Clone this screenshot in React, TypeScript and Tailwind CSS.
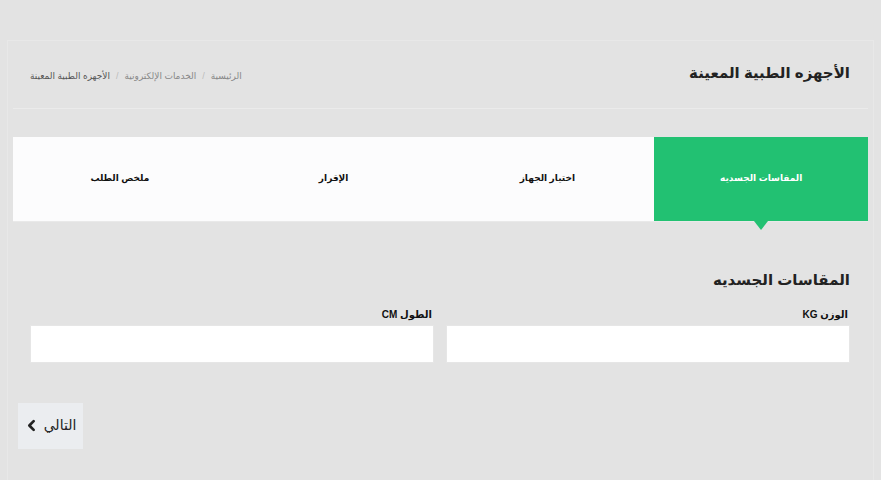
export default function App() {
  const steps = ["المقاسات الجسديه", "اختيار الجهاز", "الإقرار", "ملخص الطلب"];
  return (
    <main
      dir="rtl"
      className="w-[881px] h-[480px] bg-[#e3e3e3] overflow-hidden pt-[40px] px-[7px]"
      style={{ fontFamily: '"Liberation Sans", "DejaVu Sans", sans-serif' }}
    >
      <div className="h-full border-t border-r border-l border-[#e8e8e8] px-[5px]">
        {/* header */}
        <div className="flex items-center justify-between h-[68px] border-b border-[#ebebeb] pr-[18px] pl-[17px]">
          <h1 className="text-[15px] font-bold text-[#222] mt-[-2px]">الأجهزه الطبية المعينة</h1>
          <nav className="flex items-center gap-[6px] text-[9px] text-[#666] mt-[4px]">
            <span className="text-[#888]">الرئيسية</span>
            <span className="text-[#bbb]">/</span>
            <span className="text-[#888]">الخدمات الإلكترونية</span>
            <span className="text-[#bbb]">/</span>
            <span className="text-[#555]">الأجهزه الطبية المعينة</span>
          </nav>
        </div>

        {/* steps */}
        <div className="grid grid-cols-4 h-[85px] mt-[28px] bg-[#fcfcfd] border-b border-[#e9e9e9]">
          {steps.map((s, i) => (
            <div
              key={s}
              className={
                i === 0
                  ? "relative flex items-center justify-center bg-[#22c172] text-white text-[9px] font-bold"
                  : "flex items-center justify-center text-[#111] text-[9px] font-bold"
              }
            >
              {s}
              {i === 0 && (
                <span className="absolute left-1/2 -translate-x-1/2 top-full w-0 h-0 border-l-[7px] border-r-[7px] border-t-[9px] border-l-transparent border-r-transparent border-t-[#22c172]" />
              )}
            </div>
          ))}
        </div>

        {/* form */}
        <section className="pr-[18px] pl-[17px] mt-[47px]">
          <h2 className="text-[15px] font-bold text-[#222]">المقاسات الجسديه</h2>
          <div className="grid grid-cols-2 gap-[12px] mt-[15px]">
            <label className="flex flex-col gap-[3px]">
              <span className="text-[10px] font-bold text-[#111] pr-[2px]">الوزن KG</span>
              <input className="h-[38px] bg-white border border-[#e6e6e6] outline-none" />
            </label>
            <label className="flex flex-col gap-[3px]">
              <span className="text-[10px] font-bold text-[#111] pr-[2px]">الطول CM</span>
              <input className="h-[38px] bg-white border border-[#e6e6e6] outline-none" />
            </label>
          </div>
        </section>

        <div className="flex justify-end mt-[40px] pl-[5px]">
          <button className="flex items-center gap-[6px] w-[65px] h-[46px] justify-center bg-[#ebedf0] text-[14px] text-[#222]">
            التالي
            <svg viewBox="0 0 24 24" className="w-[13px] h-[13px]" fill="none" stroke="currentColor" strokeWidth={5} strokeLinecap="round" strokeLinejoin="round">
              <path d="M16 4l-8 8 8 8" />
            </svg>
          </button>
        </div>
      </div>
    </main>
  );
}
